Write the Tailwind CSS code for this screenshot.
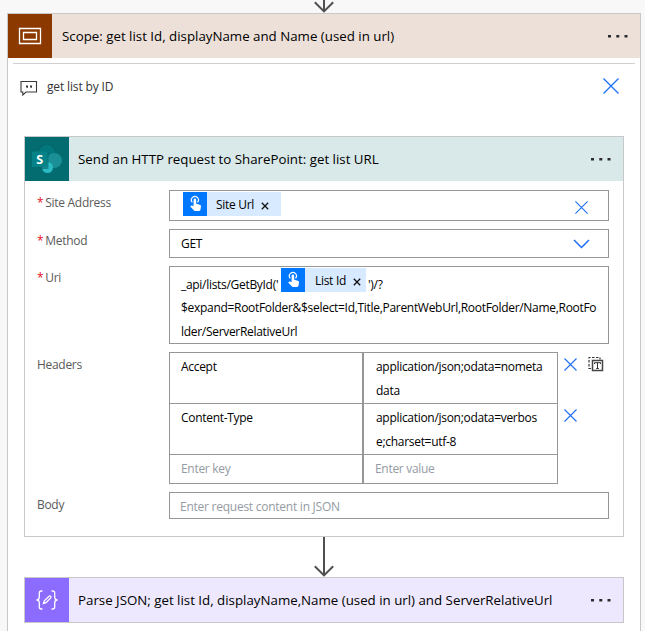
<!DOCTYPE html>
<html lang="en">
<head>
<meta charset="utf-8">
<title>Flow designer</title>
<script src="https://cdn.jsdelivr.net/npm/@tailwindcss/browser@4"></script>
</head>
<body class="h-[631px] w-[645px] overflow-hidden bg-[#f8f8f8] font-['Open_Sans','Noto_Sans',sans-serif] text-[12px] text-black">
<svg width="0" height="0" class="absolute">
  <defs>
    <symbol id="x" viewBox="0 0 16 16"><path d="M.5.5l15 15M15.5.5l-15 15" fill="none" stroke="#1b6ff5" stroke-width="1.3"/></symbol>
    <symbol id="dots" viewBox="0 0 20 4"><path d="M0 1h3v2.500H0zM8.300 1h3v2.500h-3zM16.500 1h3v2.500h-3z" fill="#2b2b2b"/></symbol>
    <symbol id="tap" viewBox="0 0 24 24"><path d="M9.300 10.300a3.500 3.500 0 1 1 5.200 0" fill="none" stroke="#fff" stroke-width="1.200"/><path d="M10.600 7.800a1.300 1.300 0 0 1 2.600 0v4l3.600.9q1.300.4 1.200 1.700l-.5 3.100q-.3 1.500-1.600 1.500h-3.600q-.8 0-1.300-.6L7.200 14.400l.7-.7q.5-.4 1.100-.2l1.600.6z" fill="#fff"/></symbol>
    <symbol id="cx" viewBox="0 0 8 8"><path d="M.8.8l6.400 6.400M7.200.8L.8 7.200" fill="none" stroke="#111" stroke-width="1.300"/></symbol>
  </defs>
</svg>
<div class="flex h-[13px] justify-center pl-[3px]">
  <svg class="h-[13px] w-[20px]" viewBox="0 0 20 13"><path d="M10 0v12M.8 2.200l9.200 9.200 9.200-9.200" fill="none" stroke="#505050" stroke-width="2"/></svg>
</div>
<main class="ml-[7px] h-[640px] w-[634px] border border-[#c8c8c8] bg-white">
  <header class="flex h-[44px] items-center bg-[#ede0d9]">
    <div class="flex size-[44px] items-center justify-center bg-[#8c3900]">
      <svg class="h-[18px] w-[24px]" viewBox="0 0 24 18"><path d="M1.500 1.500h21v15h-21zM5.500 5.500h13v7h-13z" fill="none" stroke="#fff" stroke-width="1.300"/></svg>
    </div>
    <h1 class="ml-[10px] whitespace-nowrap text-[13.3px] leading-[20px]"><span>Scope: get list Id, displayName and Name (used in url)</span></h1>
    <svg class="mr-[12px] ml-auto h-[4px] w-[20px]"><use href="#dots"/></svg>
  </header>
  <div class="mx-[5px] mt-[5px] border-t border-[#d0d0d0]"></div>
  <div class="flex h-[45px] items-center pr-[21px] pl-[12px]">
    <svg class="mt-[3px] h-[16px] w-[18px]" viewBox="0 0 18 16"><path d="M1 1.500h15.500v10.500H6L2.800 15v-3H1z" fill="none" stroke="#3a3a3a" stroke-width="1.100"/><path d="M6 5.500h2v2L6.700 8.200V7.300H6zM10 5.500h2v2l-1.300.7v-.9H10z" fill="#3a3a3a"/></svg>
    <span class="mt-[1px] ml-[9px] tracking-[-0.15px] text-[#333]">get list by ID</span>
    <svg class="mb-[2px] ml-auto size-[16px]"><use href="#x"/></svg>
  </div>
  <section class="mt-[27px] ml-[16px] h-[401px] w-[600px] border border-[#c8c8c8]">
    <header class="flex h-[44px] items-center bg-[#d9e8e8]">
      <div class="flex size-[44px] items-center justify-center bg-[#036c70]">
        <svg class="size-[44px]" viewBox="0 0 44 44"><circle cx="22" cy="15.500" r="8.700" fill="#05666a"/><circle cx="22" cy="16" r="8.200" fill="#03787c"/><circle cx="29.500" cy="23.500" r="7.500" fill="#1a8f95"/><circle cx="22.500" cy="30.500" r="5.500" fill="#2bb9c4"/><path d="M9 15h14.500v17H16q-4-1-6-4z" fill="#025f63" opacity=".55"/><rect x="7" y="14.500" width="15.500" height="15.500" rx="1.300" fill="#038387"/><text x="11.300" y="26.800" font-family="Open Sans" font-size="12.500" font-weight="700" fill="#fff">S</text></svg>
      </div>
      <h2 class="ml-[9px] whitespace-nowrap text-[13.3px] leading-[20px]"><span>Send an HTTP request to SharePoint: get list URL</span></h2>
      <svg class="mr-[12px] ml-auto h-[4px] w-[20px]"><use href="#dots"/></svg>
    </header>
    <div class="flex flex-col gap-[8px] pt-[9px] pl-[12px] leading-[24px] tracking-[-0.3px]">
      <div class="flex"><div class="w-[132px] pt-[1px] text-[#5a5a5a]"><span class="mr-[2px] text-[#e81123]">*</span><span>Site Address</span></div>
        <div class="flex h-[31px] w-[440px] items-center border border-[#969696] pr-[20px] pl-[13px]">
          <div class="mb-[3px] flex h-[24px] w-[98px] items-center bg-[#d8eaff]"><svg class="mr-[9px] size-[24px] bg-[#0077ff]"><use href="#tap"/></svg><span class="mt-[2px]">Site Url</span><svg class="mt-[4px] ml-[7px] size-[8px]"><use href="#cx"/></svg></div>
          <svg class="mt-[3px] ml-auto size-[13px]"><use href="#x"/></svg>
        </div></div>
      <div class="flex"><div class="w-[132px] text-[#5a5a5a]"><span class="mr-[2px] text-[#e81123]">*</span><span>Method</span></div>
        <div class="flex h-[29px] w-[440px] items-center border border-[#969696] pr-[18px] pl-[11px]"><span class="mt-[1px]">GET</span>
          <svg class="mt-[1px] ml-auto h-[10px] w-[17px]" viewBox="0 0 17 10"><path d="M1 1l7.500 7.500L16 1" fill="none" stroke="#1b6ff5" stroke-width="1.500"/></svg>
        </div></div>
      <div class="flex"><div class="w-[132px] text-[#5a5a5a]"><span class="mr-[2px] text-[#e81123]">*</span><span>Uri</span></div>
        <div class="h-[78px] w-[440px] border border-[#969696] pt-[1px] pl-[11px] whitespace-nowrap">
          <div class="flex h-[28px]"><span class="mt-[5px] w-[100px]">_api/lists/GetById('</span>
            <div class="flex h-[24px] w-[85px] items-center bg-[#d8eaff]"><svg class="mr-[10px] size-[24px] bg-[#0077ff]"><use href="#tap"/></svg><span class="mt-[2px]">List Id</span><svg class="mt-[3px] ml-[7px] size-[8px]"><use href="#cx"/></svg></div>
            <span class="mt-[5px] ml-[2px]">')/?</span></div>
          <div><span>$expand=RootFolder&amp;$select=Id,Title,ParentWebUrl,RootFolder/Name,RootFo</span></div>
          <div><span>lder/ServerRelativeUrl</span></div>
        </div></div>
      <div class="flex"><div class="w-[132px] pt-[1px] text-[#5a5a5a]"><span>Headers</span></div>
        <div class="grid h-[132px] w-[389px] grid-cols-[192px_1fr] grid-rows-[50px_50px_28px] gap-x-[2px] gap-y-px border border-[#969696] bg-[#969696] whitespace-nowrap *:bg-white">
          <div class="pt-[2px] pl-[11px]"><span>Accept</span></div>
          <div class="pt-[2px] pl-[12px]"><span>application/json;odata=nometa</span><br><span>data</span></div>
          <div class="pt-[2px] pl-[11px]"><span>Content-Type</span></div>
          <div class="pt-[2px] pl-[12px]"><span>application/json;odata=verbos</span><br><span>e;charset=utf-8</span></div>
          <div class="pt-[2px] pl-[11px] text-[#949ba3]"><span>Enter key</span></div>
          <div class="pt-[2px] pl-[11px] text-[#949ba3]"><span>Enter value</span></div>
        </div>
        <div class="flex flex-col gap-[38px] pt-[6px] pl-[6px]"><svg class="size-[13px]" viewBox="0 0 13 13"><path d="M.5.5l12 12M12.500.5l-12 12" fill="none" stroke="#1b6ff5" stroke-width="1.100"/></svg><svg class="size-[13px]" viewBox="0 0 13 13"><path d="M.5.5l12 12M12.500.5l-12 12" fill="none" stroke="#1b6ff5" stroke-width="1.100"/></svg></div>
        <svg class="mt-[4px] ml-[11px] size-[16px]" viewBox="0 0 16 16"><path d="M3 12.500H1v-11h11v2" fill="none" stroke="#333" stroke-width="1.200" stroke-dasharray="2.500 1.500"/><path d="M4.500 4.500h10v10h-10z" fill="#fff" stroke="#444" stroke-width="1.500"/><path d="M6.500 8V6.700h6V8M9.500 6.700v5.800M8.200 12.500h2.600" fill="none" stroke="#333"/></svg>
      </div>
      <div class="flex"><div class="w-[132px] pt-[1px] text-[#5a5a5a]"><span>Body</span></div>
        <div class="h-[27px] w-[440px] border border-[#969696] pt-[2px] pl-[10px] tracking-[-0.25px] text-[#949ba3]"><span>Enter request content in JSON</span></div></div>
    </div>
  </section>
  <svg class="ml-[306px] h-[40px] w-[20px]" viewBox="0 0 20 40"><path d="M10 0v39M.8 29.200l9.200 9.200 9.200-9.200" fill="none" stroke="#505050" stroke-width="2"/></svg>
  <section class="ml-[16px] flex h-[46px] w-[600px] items-center border border-[#c8c8c8] bg-[#ede8fd]">
    <div class="flex size-[44px] items-center justify-center bg-[#8c6cff]">
      <svg class="h-[20px] w-[24px]" viewBox="0 0 24 20"><g fill="none" stroke="#fff" stroke-width="1.300"><path d="M7.500 1H6.300Q4.300 1 4.300 3v4Q4.300 10 1.500 10q2.800 0 2.800 3v4q0 2 2 2h1.200M16.500 1h1.200q2 0 2 2v4q0 3 2.800 3-2.800 0-2.800 3v4q0 2-2 2h-1.200"/><path d="M8.500 13.500l.8-2.700 4.700-4.600q1-.7 1.700 0t0 1.700L11 12.600z"/></g></svg>
    </div>
    <h2 class="ml-[9px] whitespace-nowrap text-[13.3px] leading-[20px]"><span>Parse JSON; get list Id, displayName,Name (used in url) and ServerRelativeUrl</span></h2>
    <svg class="mr-[12px] ml-auto h-[4px] w-[20px]"><use href="#dots"/></svg>
  </section>
</main>
</body>
</html>
